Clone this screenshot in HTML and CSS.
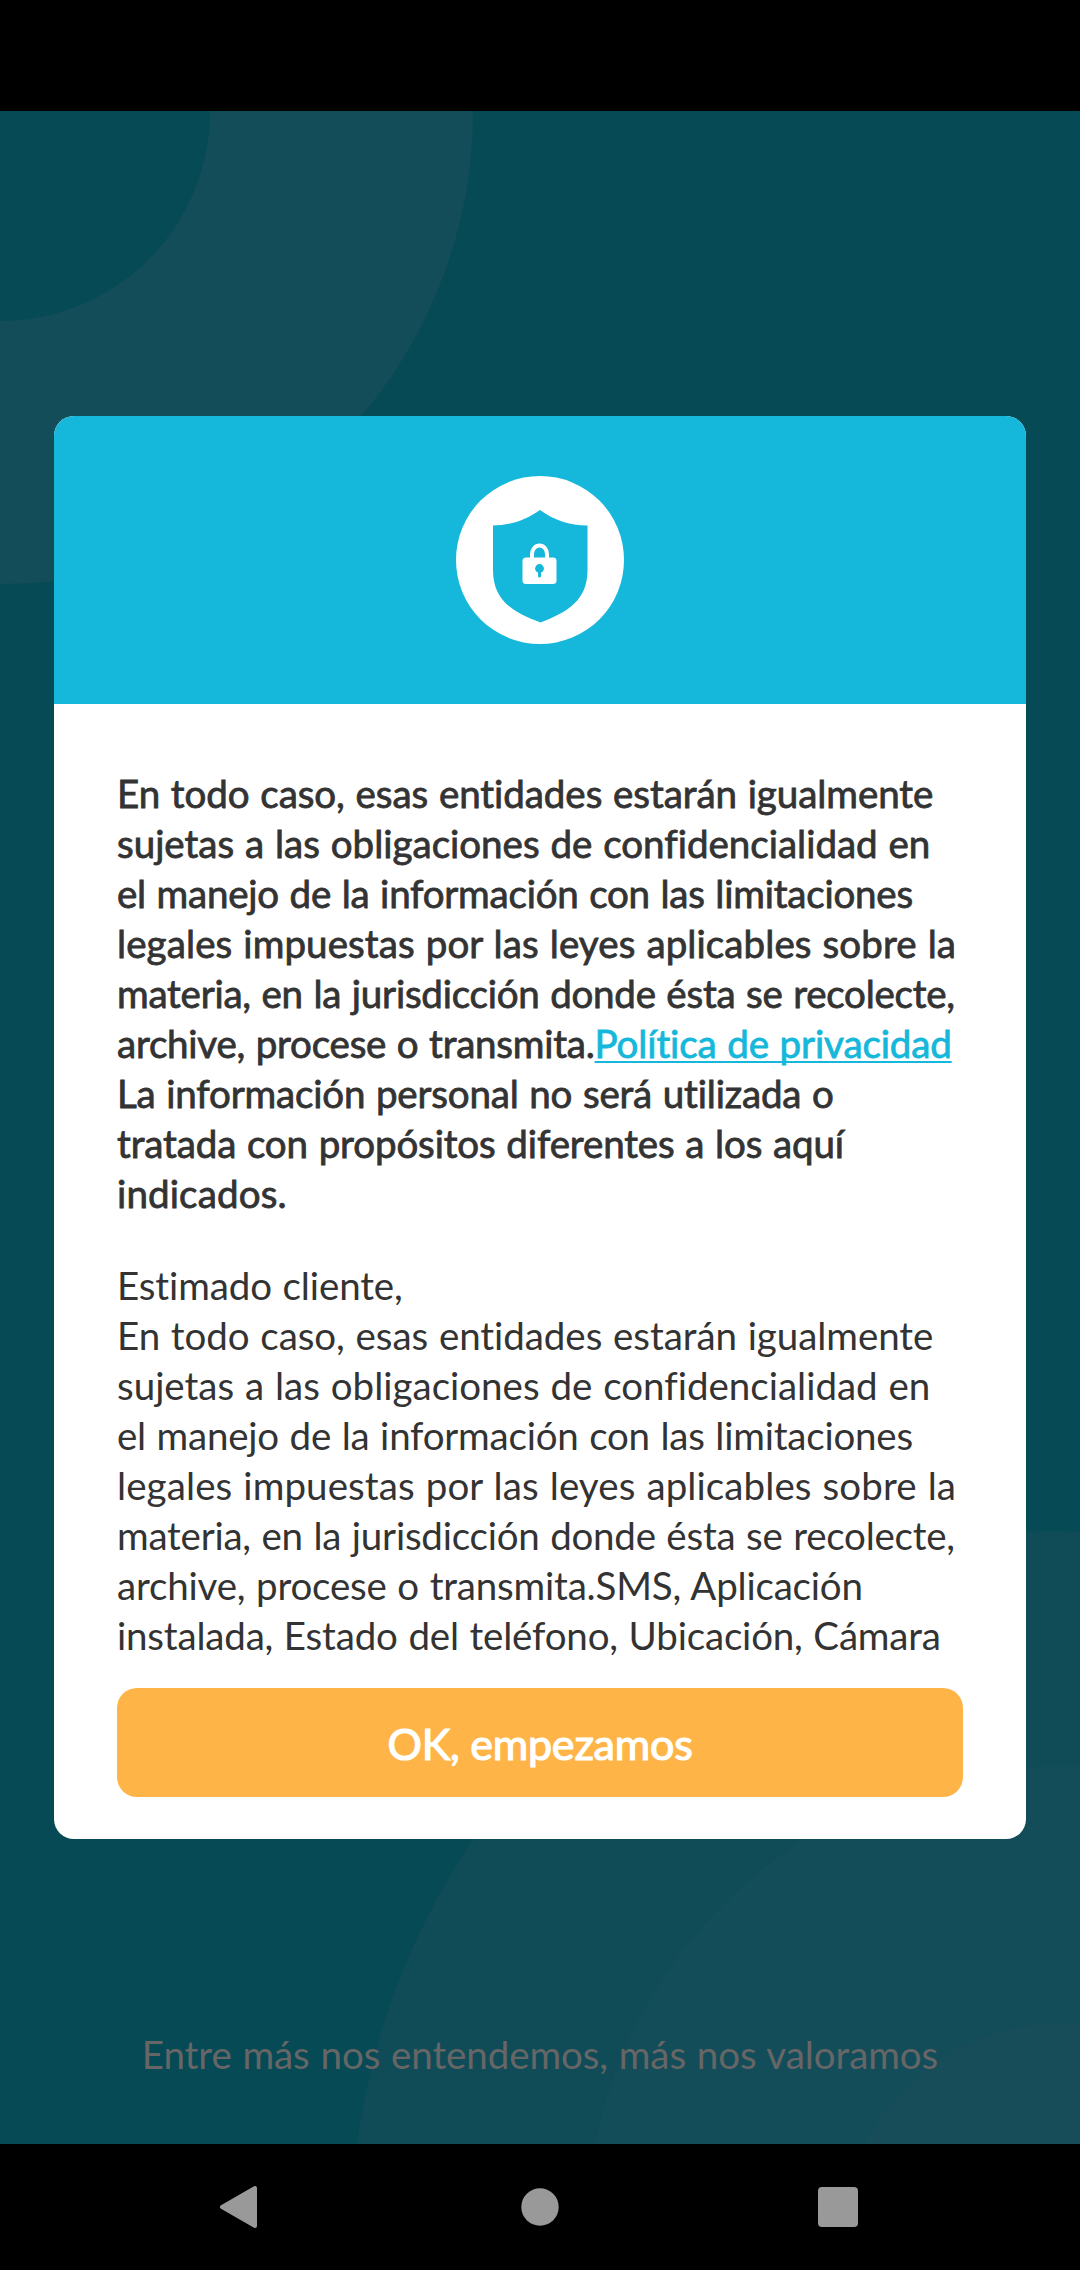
FILE: index.html
```
<!DOCTYPE html>
<html lang="es">
<head>
<meta charset="utf-8">
<title>Política de privacidad</title>
<link rel="stylesheet" href="styles.css">
</head>
<body>
<div class="status-bar"></div>
<main class="screen">
  <svg class="backdrop" viewBox="0 0 1080 2033" aria-hidden="true">
    <circle cx="0" cy="0" r="341.5" fill="none" stroke="#134d59" stroke-width="263"/>
    <circle cx="1056" cy="2125" r="705" fill="#0f4c58"/>
    <circle cx="1056" cy="2125" r="470" fill="#134d59"/>
    <circle cx="1056" cy="2125" r="212" fill="#174d59"/>
  </svg>
  <p class="slogan">Entre más nos entendemos, más nos valoramos</p>
  <div class="overlay">
    <section class="dialog">
      <header class="dialog-header">
        <svg class="badge" viewBox="0 0 168 168" aria-hidden="true">
          <circle cx="84" cy="84" r="84" fill="#fff"/>
          <path d="M84 34C98 44 113 49.500 131.500 49.500V94C131.500 124 112 136 84.500 146.500C56 136 37 124 37 94V49.500C54 49.500 70 44 84 34Z" fill="#15b7da"/>
          <path d="M76 83V78a7.500 8.500 0 0 1 15 0v5" fill="none" stroke="#fff" stroke-width="4"/>
          <rect x="66.500" y="81.500" width="34" height="26.500" rx="3.500" fill="#fff"/>
          <circle cx="83.500" cy="92.500" r="4.400" fill="#15b7da"/>
          <path d="M83.500 93v7" stroke="#15b7da" stroke-width="3" stroke-linecap="round"/>
        </svg>
      </header>
      <div class="dialog-body">
        <p class="copy copy-strong">
          <span class="line t1">En todo caso, esas entidades estarán igualmente</span>
          <span class="line t2">sujetas a las obligaciones de confidencialidad en</span>
          <span class="line t3">el manejo de la información con las limitaciones</span>
          <span class="line t4">legales impuestas por las leyes aplicables sobre la</span>
          <span class="line t5">materia, en la jurisdicción donde ésta se recolecte,</span>
          <span class="line t6">archive, procese o transmita.<a class="link" href="#">Política de privacidad</a></span>
          <span class="line t7">La información personal no será utilizada o</span>
          <span class="line t8">tratada con propósitos diferentes a los aquí</span>
          <span class="line t9">indicados.</span>
        </p>
        <p class="copy">
          <span class="line t10">Estimado cliente,</span>
          <span class="line t1">En todo caso, esas entidades estarán igualmente</span>
          <span class="line t2">sujetas a las obligaciones de confidencialidad en</span>
          <span class="line t3">el manejo de la información con las limitaciones</span>
          <span class="line t4">legales impuestas por las leyes aplicables sobre la</span>
          <span class="line t5">materia, en la jurisdicción donde ésta se recolecte,</span>
          <span class="line t11">archive, procese o transmita.SMS, Aplicación</span>
          <span class="line t12">instalada, Estado del teléfono, Ubicación, Cámara</span>
        </p>
        <button class="accept" type="button">OK, empezamos</button>
      </div>
    </section>
  </div>
</main>
<nav class="nav-bar">
  <svg class="nav-icon" viewBox="0 0 60 60" aria-hidden="true"><path d="M12 30L45 11V49Z" fill="#999" stroke="#999" stroke-width="4" stroke-linejoin="round"/></svg>
  <svg class="nav-icon" viewBox="0 0 60 60" aria-hidden="true"><circle cx="31" cy="30" r="18.700" fill="#999"/></svg>
  <svg class="nav-icon" viewBox="0 0 60 60" aria-hidden="true"><rect x="10" y="10" width="40" height="40" rx="4" fill="#999"/></svg>
</nav>
</body>
</html>
```
FILE: styles.css
```
* {
  box-sizing: border-box;
}

body {
  margin: 0;
  width: 1080px;
  height: 2270px;
  display: flex;
  flex-direction: column;
  background: #000;
  font-family: Lato, "Open Sans", sans-serif;
  font-size: 38.5px;
  line-height: 50px;
  font-variant-ligatures: none;
}

.status-bar {
  height: 111px;
}

.screen {
  position: relative;
  flex: 1;
  display: flex;
  flex-direction: column;
  justify-content: flex-end;
  overflow: hidden;
  background: #064a55;
}

.backdrop {
  position: absolute;
  inset: 0;
  width: 1080px;
  height: 2033px;
}

.slogan {
  position: relative;
  margin: 0 0 65px;
  text-align: center;
  white-space: nowrap;
  color: #666;
  word-spacing: 1px;
  letter-spacing: -0.08px;
}

.overlay {
  position: absolute;
  inset: 0;
  display: flex;
  align-items: center;
  justify-content: center;
}

.dialog {
  width: 972px;
  border-radius: 20px;
  overflow: hidden;
  background: #fff;
}

.dialog-header {
  display: flex;
  justify-content: center;
  padding: 60px 0;
  background: #15b7da;
}

.badge {
  width: 168px;
  height: 168px;
}

.dialog-body {
  display: flex;
  flex-direction: column;
  padding: 64px 63px 42px;
}

.copy {
  margin: 0 0 28px;
  color: #333;
  word-spacing: 1px;
}

.copy-strong {
  margin-bottom: 42px;
  -webkit-text-stroke: 0.8px currentColor;
}

.line {
  display: block;
  white-space: nowrap;
}

.t1 { letter-spacing: -0.06px; }
.t2 { letter-spacing: 0; }
.t3 { letter-spacing: -0.22px; }
.t4 { letter-spacing: 0.1px; }
.t5 { letter-spacing: -0.23px; }
.t6 { letter-spacing: -0.22px; }
.t7 { letter-spacing: -0.17px; }
.t8 { letter-spacing: -0.12px; }
.t9 { letter-spacing: 0.15px; }
.t10 { letter-spacing: -0.12px; }
.t11 { letter-spacing: -0.19px; }
.t12 { letter-spacing: -0.18px; }

.link {
  color: #15b7da;
  letter-spacing: -0.12px;
  text-decoration: underline;
  text-decoration-thickness: 2px;
  text-decoration-skip-ink: none;
  text-underline-offset: 3px;
}

.accept {
  height: 109px;
  padding: 2px 0 0;
  border: 0;
  border-radius: 20px;
  background: #ffb448;
  color: #fff;
  font: 43px Lato, "Open Sans", sans-serif;
  letter-spacing: -0.2px;
  -webkit-text-stroke: 1.2px currentColor;
}

.nav-bar {
  height: 126px;
  display: flex;
  justify-content: space-between;
  align-items: center;
  padding: 0 212px 0 210px;
}

.nav-icon {
  width: 60px;
  height: 60px;
}
```
